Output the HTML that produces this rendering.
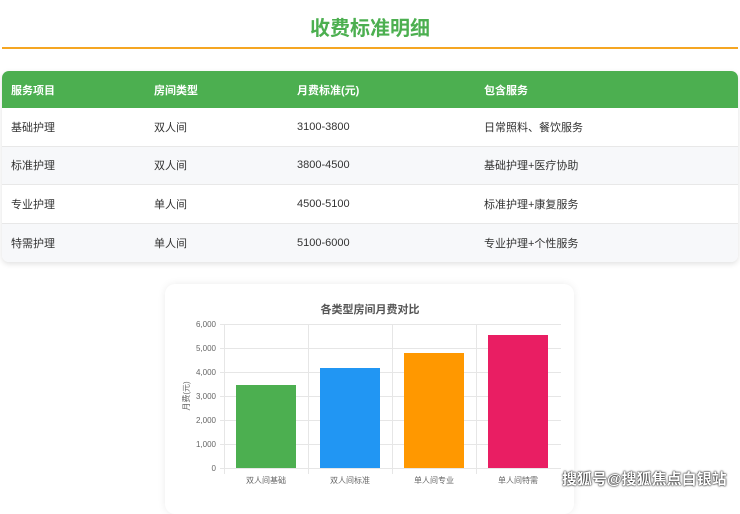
<!DOCTYPE html>
<html><head><meta charset="utf-8"><style>
*{margin:0;padding:0;box-sizing:border-box}
body{width:740px;height:495px;overflow:hidden;background:#fff;font-family:"Liberation Sans","Noto Sans CJK SC",sans-serif;position:relative}
h1{position:absolute;top:12px;left:0;width:740px;text-align:center;font-size:20px;color:#4CAF50;font-weight:bold}
.line{position:absolute;top:47px;left:2px;width:736px;height:2px;background:#F5A623}
.tbl{position:absolute;top:71px;left:2px;width:736px;border-radius:7px;overflow:hidden;box-shadow:0 2px 6px rgba(0,0,0,.12)}
.r{height:38.5px;position:relative;font-size:11px;color:#333;border-bottom:1px solid #e8e8e8}
.r span{position:absolute;top:50%;transform:translateY(-50%)}
.h{background:#4CAF50;color:#fff;font-weight:bold;height:37px;border:none}
.alt{background:#f7f8fa}
.c1{left:9px}.c2{left:152px}.c3{left:295px}.c4{left:482px}
.card{position:absolute;left:165px;top:284px;width:409px;height:230px;border-radius:10px;box-shadow:0 0 8px rgba(0,0,0,.08);background:#fff}
.wm{position:absolute;left:562px;top:468px;font-size:15px;color:#fff;font-weight:bold;text-shadow:0 0 2px #000,0 0 1px #000}
</style></head><body>
<h1>收费标准明细</h1>
<div class="line"></div>
<div class="tbl">
<div class="r h"><span class="c1">服务项目</span><span class="c2">房间类型</span><span class="c3">月费标准(元)</span><span class="c4">包含服务</span></div>
<div class="r"><span class="c1">基础护理</span><span class="c2">双人间</span><span class="c3">3100-3800</span><span class="c4">日常照料、餐饮服务</span></div>
<div class="r alt"><span class="c1">标准护理</span><span class="c2">双人间</span><span class="c3">3800-4500</span><span class="c4">基础护理+医疗协助</span></div>
<div class="r"><span class="c1">专业护理</span><span class="c2">单人间</span><span class="c3">4500-5100</span><span class="c4">标准护理+康复服务</span></div>
<div class="r alt" style="border:none"><span class="c1">特需护理</span><span class="c2">单人间</span><span class="c3">5100-6000</span><span class="c4">专业护理+个性服务</span></div>
</div>
<div class="card"></div>
<svg style="position:absolute;left:0;top:0" width="740" height="495" font-family="Liberation Sans,Noto Sans CJK SC,sans-serif">
<text x="370" y="313" text-anchor="middle" font-size="11" font-weight="bold" fill="#555">各类型房间月费对比</text>
<g stroke="#e6e6e6" stroke-width="1">
<line x1="220" x2="561" y1="324.5" y2="324.5"/><line x1="220" x2="561" y1="348.5" y2="348.5"/><line x1="220" x2="561" y1="372.5" y2="372.5"/><line x1="220" x2="561" y1="396.5" y2="396.5"/><line x1="220" x2="561" y1="420.5" y2="420.5"/><line x1="220" x2="561" y1="444.5" y2="444.5"/><line x1="220" x2="561" y1="468.5" y2="468.5"/>
<line x1="224.5" x2="224.5" y1="324" y2="474"/><line x1="308.5" x2="308.5" y1="324" y2="474"/><line x1="392.5" x2="392.5" y1="324" y2="474"/><line x1="476.5" x2="476.5" y1="324" y2="474"/>
</g>
<g font-size="8" fill="#666" text-anchor="end">
<text x="216" y="327">6,000</text><text x="216" y="351">5,000</text><text x="216" y="375">4,000</text><text x="216" y="399">3,000</text><text x="216" y="423">2,000</text><text x="216" y="447">1,000</text><text x="216" y="471">0</text>
</g>
<text transform="translate(189,396) rotate(-90)" text-anchor="middle" font-size="8" fill="#666">月费(元)</text>
<rect x="236" y="385" width="60" height="83" fill="#4CAF50"/>
<rect x="320" y="368" width="60" height="100" fill="#2196F3"/>
<rect x="404" y="353" width="60" height="115" fill="#FF9800"/>
<rect x="488" y="335" width="60" height="133" fill="#E91E63"/>
<g font-size="8" fill="#666" text-anchor="middle">
<text x="266" y="483">双人间基础</text><text x="350" y="483">双人间标准</text><text x="434" y="483">单人间专业</text><text x="518" y="483">单人间特需</text>
</g>
</svg>
<div class="wm">搜狐号@搜狐焦点白银站</div>
</body></html>
